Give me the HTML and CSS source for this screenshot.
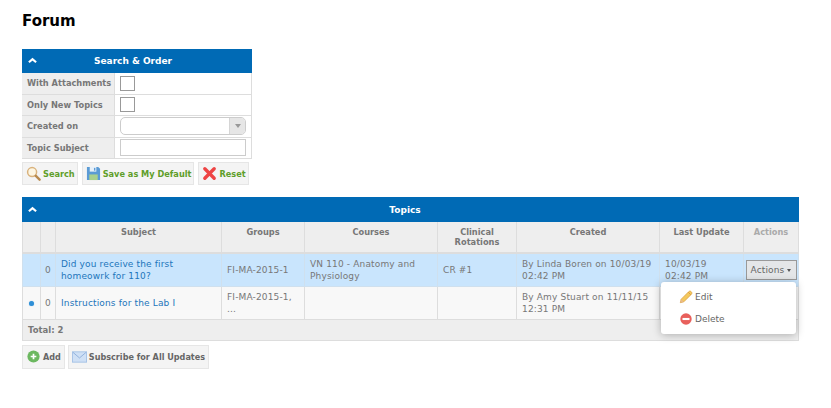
FILE: index.html
```html
<!DOCTYPE html>
<html lang="en">
<head>
<meta charset="utf-8">
<title>Forum</title>
<link rel="stylesheet" href="styles.css">
</head>
<body>
<h1 class="title">Forum</h1>

<section class="panel search-panel">
  <header class="panel-head">
    <svg class="chev" viewBox="0 0 10 7"><path d="M1 5.500 5 2l4 3.500" fill="none" stroke="#fff" stroke-width="2.400"/></svg>
    <span>Search &amp; Order</span>
  </header>
  <div class="form-grid">
    <div class="f-label">With Attachments</div>
    <div class="f-value"><span class="check"></span></div>
    <div class="f-label">Only New Topics</div>
    <div class="f-value"><span class="check"></span></div>
    <div class="f-label">Created on</div>
    <div class="f-value"><span class="select"><span class="select-btn"><i class="select-arrow"></i></span></span></div>
    <div class="f-label">Topic Subject</div>
    <div class="f-value"><span class="textbox"></span></div>
  </div>
</section>

<div class="buttons search-buttons">
  <button class="btn green">
    <svg class="ico" viewBox="0 0 16 16"><circle cx="6.500" cy="6.500" r="4.800" fill="#fdf6e3" stroke="#d9b27c" stroke-width="1.600"/><path d="m10.500 10.500 4 4" stroke="#b98a4e" stroke-width="2.600" stroke-linecap="round"/></svg>
    Search
  </button>
  <button class="btn green">
    <svg class="ico" viewBox="0 0 16 16"><path d="M1 1h12l2 2v12H1z" fill="#5b9bd5"/><rect x="4" y="1" width="7" height="5" fill="#e8f1fa"/><rect x="8.500" y="2" width="1.500" height="3" fill="#5b9bd5"/><rect x="3.500" y="9" width="9" height="6" fill="#a9d08e"/></svg>
    Save as My Default
  </button>
  <button class="btn green">
    <svg class="ico" viewBox="0 0 16 16"><path d="M3 3l10 10M13 3 3 13" stroke="#ee4444" stroke-width="3.600" stroke-linecap="round"/></svg>
    Reset
  </button>
</div>

<section class="panel topics-panel">
  <header class="panel-head">
    <svg class="chev" viewBox="0 0 10 7"><path d="M1 5.500 5 2l4 3.500" fill="none" stroke="#fff" stroke-width="2.400"/></svg>
    <span>Topics</span>
  </header>
  <table class="topics">
    <colgroup>
      <col class="c-dot"><col class="c-num"><col class="c-subject"><col class="c-groups"><col class="c-courses"><col class="c-rot"><col class="c-created"><col class="c-update"><col class="c-actions">
    </colgroup>
    <thead>
      <tr>
        <th></th><th></th><th>Subject</th><th>Groups</th><th>Courses</th><th>Clinical<br>Rotations</th><th>Created</th><th>Last Update</th><th class="muted">Actions</th>
      </tr>
    </thead>
    <tbody>
      <tr class="selected">
        <td></td><td class="center">0</td>
        <td><a href="#">Did you receive the first homeowrk for 110?</a></td>
        <td>FI-MA-2015-1</td>
        <td>VN 110 - Anatomy and Physiology</td>
        <td>CR #1</td>
        <td>By Linda Boren on 10/03/19 02:42 PM</td>
        <td>10/03/19<br>02:42 PM</td>
        <td class="center"><span class="actions-btn">Actions <i class="caret"></i></span></td>
      </tr>
      <tr>
        <td class="center"><i class="dot"></i></td><td class="center">0</td>
        <td><a href="#">Instructions for the Lab I</a></td>
        <td>FI-MA-2015-1, ...</td>
        <td></td>
        <td></td>
        <td>By Amy Stuart on 11/11/15 12:31 PM</td>
        <td></td>
        <td></td>
      </tr>
    </tbody>
    <tfoot>
      <tr><td colspan="9">Total: 2</td></tr>
    </tfoot>
  </table>
  <div class="menu">
    <div class="menu-item">
      <svg class="ico" viewBox="0 0 16 16"><path d="M1.500 14.500 2.500 10.500 11 2c1-1 2-1 3 0s1 2 0 3l-8.500 8.500z" fill="#f4c95d" stroke="#d9993a" stroke-width=".8"/><path d="M1.500 14.500 2.500 10.500 5.500 13.500z" fill="#e8b98a"/><path d="M10.500 2.500 13.500 5.500" stroke="#d9993a" stroke-width="1"/></svg>
      Edit
    </div>
    <div class="menu-item">
      <svg class="ico" viewBox="0 0 16 16"><circle cx="8" cy="8" r="6.500" fill="#e8605c"/><rect x="4" y="6.800" width="8" height="2.400" fill="#fff"/></svg>
      Delete
    </div>
  </div>
</section>

<div class="buttons bottom-buttons">
  <button class="btn grey">
    <svg class="ico" viewBox="0 0 16 16"><circle cx="8" cy="8" r="6.500" fill="#6cb860"/><path d="M8 5v6M5 8h6" stroke="#fff" stroke-width="1.800"/></svg>
    Add
  </button>
  <button class="btn grey">
    <svg class="ico mail" viewBox="0 0 16 12"><rect x=".5" y=".5" width="15" height="11" fill="#cfe0f5" stroke="#a5c2e6"/><path d="M1 1l7 6 7-6" fill="none" stroke="#8fb0dc"/></svg>
    Subscribe for All Updates
  </button>
</div>
</body>
</html>
```

FILE: styles.css
```css
* { box-sizing: border-box; }

html, body { margin: 0; background: #fff; }

body {
  padding: 14px 32px 0 22px;
  font-family: "DejaVu Sans", Verdana, sans-serif;
  font-size: 9px;
  color: #666;
  overflow: hidden;
}

.title {
  margin: 0 0 20px;
  font-size: 15px;
  line-height: 15px;
  font-weight: 700;
  color: #000;
}

.panel { position: relative; }
.search-panel { width: 230px; border-right: 1px solid #ddd; }

.panel-head {
  position: relative;
  display: flex;
  align-items: center;
  justify-content: center;
  height: 24px;
  padding-right: 11px;
  background: #006ab5;
  color: #fff;
  font-weight: 700;
}
.search-panel .panel-head { margin-right: -1px; padding-right: 8px; }
.topics-panel .panel-head { height: 25px; }

.chev {
  position: absolute;
  left: 6px;
  top: 50%;
  width: 9px;
  height: 7px;
  margin-top: -4px;
}

.form-grid {
  display: grid;
  grid-template-columns: 93px 1fr;
  grid-auto-rows: 21.500px;
}
.f-label {
  display: flex;
  align-items: center;
  padding-left: 5px;
  background: #eee;
  border-bottom: 1px solid #ddd;
  border-right: 1px solid #ddd;
  font-size: 8.250px;
  font-weight: 700;
  white-space: nowrap;
  color: #777;
}
.f-value {
  display: flex;
  align-items: center;
  padding-left: 5px;
  border-bottom: 1px solid #ddd;
}
.check {
  width: 15px;
  height: 15px;
  border: 1px solid #999;
  background: #fff;
}
.select {
  display: flex;
  justify-content: flex-end;
  width: 126px;
  height: 18px;
  border: 1px solid #ccc;
  border-radius: 5px;
  background: #fff;
  overflow: hidden;
}
.select-btn {
  display: flex;
  align-items: center;
  justify-content: center;
  width: 16px;
  background: #e6e6e6;
  border-left: 1px solid #d5d5d5;
}
.select-arrow {
  border-left: 3px solid transparent;
  border-right: 3px solid transparent;
  border-top: 4px solid #999;
}
.textbox {
  width: 126px;
  height: 17px;
  border: 1px solid #ccc;
  background: #fff;
}

.buttons { display: flex; gap: 4px; }
.search-buttons { margin: 3px 0 12px; }
.bottom-buttons { margin-top: 4px; gap: 3px; }

.btn {
  display: flex;
  align-items: center;
  gap: 2px;
  height: 23px;
  padding: 0 2px 0 3px;
  border: 1px solid #e6e6e6;
  border-radius: 0;
  background: #f4f4f4;
  font: 700 8.200px "DejaVu Sans", Verdana, sans-serif;
  white-space: nowrap;
}
.btn.green { color: #5f9e2a; }
.btn.grey { padding-right: 3px; color: #666; height: 24px; font-size: 8.100px; }
.ico { width: 15px; height: 15px; flex: none; }
.mail { width: 15px; height: 12px; }

.topics {
  width: 100%;
  border-collapse: collapse;
  table-layout: fixed;
}
.c-dot { width: 18px; }
.c-num { width: 15px; }
.c-subject { width: 166px; }
.c-groups { width: 83px; }
.c-courses { width: 133px; }
.c-rot { width: 79px; }
.c-created { width: 143px; }
.c-update { width: 84px; }

.topics th {
  height: 31px;
  padding: 5px 2px 0;
  background: #eee;
  border: 1px solid #ddd;
  border-top: 0;
  border-bottom: 2px solid #ddd;
  vertical-align: top;
  text-align: center;
  font-size: 8.250px;
  font-weight: 700;
  line-height: 10px;
  color: #777;
}
.topics th.muted { color: #aaa; }
.topics td {
  height: 33px;
  padding: 0 5px;
  background: #f8f8f8;
  border: 1px solid #ddd;
  line-height: 12px;
  font-size: 9px;
  letter-spacing: .15px;
  color: #777;
}
.topics td.center { padding: 0; text-align: center; }
.topics .selected td { background: #c9e5fd; border-color: #cfe0ee; }
.topics tfoot td {
  height: 21px;
  background: #eee;
  font-size: 8.500px;
  font-weight: 700;
  letter-spacing: 0;
}
.topics a { color: #1d75bb; text-decoration: none; }

.dot {
  display: inline-block;
  width: 5px;
  height: 5px;
  border-radius: 50%;
  background: #2f8fd6;
  box-shadow: 0 0 1px #7fbbe8;
}

.actions-btn {
  display: inline-block;
  width: 51px;
  height: 20px;
  line-height: 18px;
  border: 1px solid #999;
  background: #e4e6e8;
  color: #666;
}
.caret {
  display: inline-block;
  border-left: 2.500px solid transparent;
  border-right: 2.500px solid transparent;
  border-top: 3px solid #555;
  vertical-align: middle;
}

.menu {
  position: absolute;
  top: 85px;
  left: 639px;
  display: flex;
  flex-direction: column;
  width: 135px;
  height: 52px;
  padding: 4px 0 0 18px;
  background: #fff;
  border-radius: 3px;
  box-shadow: 0 1px 8px rgba(0, 0, 0, .28);
}
.menu-item {
  display: flex;
  align-items: center;
  gap: 2px;
  height: 22px;
  color: #666;
}
.menu-item .ico { width: 14px; height: 14px; }
```
